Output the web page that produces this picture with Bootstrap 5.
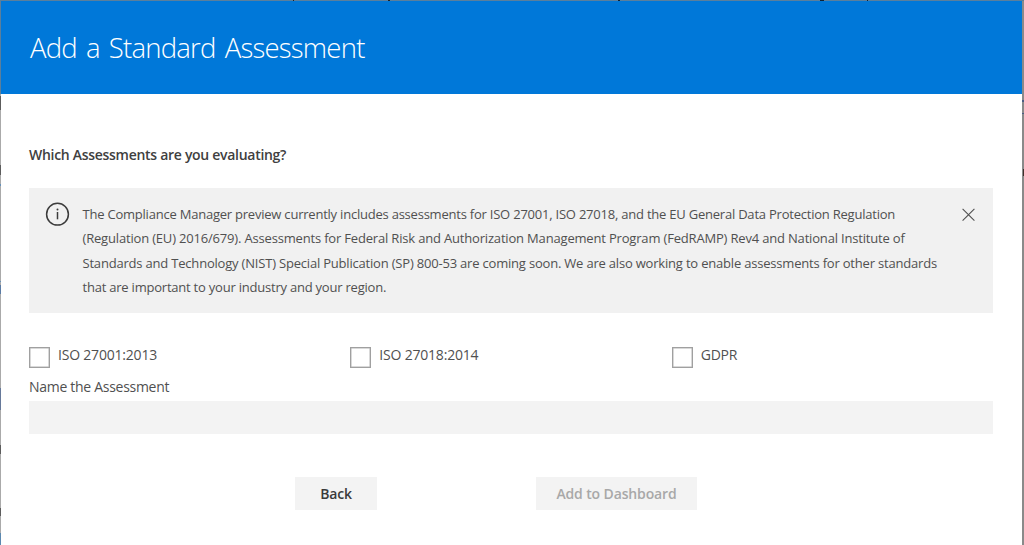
<!DOCTYPE html>
<html lang="en">
<head>
<meta charset="utf-8">
<title>Add a Standard Assessment</title>
<meta name="viewport" content="width=device-width, initial-scale=1">
<link href="https://cdn.jsdelivr.net/npm/bootstrap@5.3.0/dist/css/bootstrap.min.css" rel="stylesheet">
<script src="https://cdn.jsdelivr.net/npm/bootstrap@5.3.0/dist/js/bootstrap.bundle.min.js" defer></script>
<style>
/* dimmed page behind the dialog: only its 1-2px edges show */
body{
  height:545px;padding:1px 2px 0 1px;overflow:hidden;
  font:400 14px/24.5px "Open Sans","Noto Sans",sans-serif;color:#505050;
  background:
    linear-gradient(#222 0 0) 293px 0/1px 1px no-repeat,
    linear-gradient(#222 0 0) 388px 0/2px 1px no-repeat,
    linear-gradient(#123 0 0) 618px 0/2px 1px no-repeat,
    linear-gradient(#123 0 0) 820px 0/4px 1px no-repeat,
    linear-gradient(#123 0 0) 867px 0/1px 1px no-repeat,
    linear-gradient(#5b7f9c 0 0) 0 0/100% 1px no-repeat,
    linear-gradient(#4a5c84 0 0) 1022px 100px/2px 2px no-repeat,
    linear-gradient(#4a5c84 0 0) 1022px 113px/2px 1px no-repeat,
    linear-gradient(#40302c 0 0) 1023px 169px/1px 7px no-repeat,
    linear-gradient(#8a8a8a 0 0) 1022px 0/2px 100% no-repeat,
    linear-gradient(#5b7f9c 0 94px,#aaa 94px 96px,#5c5c5c 96px 110px,#aaa 110px 165px,#5c5c5c 165px 175px,#aaa 175px 184px,#6590b8 184px 186px,#aaa 186px 281px,#6590b8 281px 282px,#aaa 282px 285px,#5b7ba4 285px 294px,#aaa 294px 388px,#66799a 388px 410px,#aaa 410px 445px,#5c5c5c 445px 454px,#aaa 454px 508px,#5c5c5c 508px 516px,#aaa 516px 533px,#5b88b0 533px 545px);
}
.dialog{height:544px}
.dialog-head{height:93px;padding:1px 0 0 29px;background:#0078d9}
.dialog-head h1{font-size:27.5px;font-weight:300;letter-spacing:-.78px;word-spacing:2.7px;line-height:40px}
.dialog-main{padding:0 29px 0 28px}
.question{font-size:14px;font-weight:600;letter-spacing:-.29px;line-height:24px;margin:49px 0 21px;color:#404040}
.notice{height:125px;background:#f1f1f1;padding:13.5px 17.5px 0 15.5px}
.notice p{font-size:13px;width:880px;margin:0 0 0 13px;white-space:nowrap}
.notice p span{display:block}
.l1{letter-spacing:-.221px}.l2{letter-spacing:-.178px}.l3{letter-spacing:-.196px}.l4{letter-spacing:-.22px}
.options{margin-top:30px;height:32px}
.option{letter-spacing:-.2px;line-height:24px}
.tick{width:21px;height:21px;margin:4px 8px 0 0;border:1px solid #a0a0a0;border-radius:0;appearance:none;background:#fff;box-shadow:inset 0 0 0 .5px #b4b4b4}
.name-label{line-height:24px;letter-spacing:-.29px;margin-bottom:2px}
.name-box{height:33px;border:0;border-radius:0;background:#f3f3f3}
.actions{margin:43px 0 0 266px;gap:159px}
.act{height:33px;border:0;border-radius:0;padding:0;background:#f3f3f3;font-size:14px;font-weight:600;line-height:34px;color:#3a3a3a}
.act-back{width:82px;letter-spacing:-.2px}
.act-add{width:161px;letter-spacing:-.13px}
.act:disabled{background:#f3f3f3;color:#a8a8a8;opacity:1}
</style>
</head>
<body>
<div class="dialog bg-white">
  <header class="dialog-head d-flex align-items-center text-white"><h1 class="mb-0">Add a Standard Assessment</h1></header>
  <main class="dialog-main overflow-hidden">
    <h2 class="question">Which Assessments are you evaluating?</h2>
    <div class="notice d-flex align-items-start" role="note">
      <svg class="flex-shrink-0" width="25" height="25" viewBox="0 0 25 25" fill="none" stroke="#3c3c3c"><circle cx="12.5" cy="12.2" r="10.9" stroke-width="1.5"/><path d="M12.5 10v7.3" stroke-width="1.5"/><circle cx="12.5" cy="7.5" r="1" fill="#3c3c3c" stroke="none"/></svg>
      <p><span class="l1">The Compliance Manager preview currently includes assessments for ISO 27001, ISO 27018, and the EU General Data Protection Regulation</span><span class="l2">(Regulation (EU) 2016/679). Assessments for Federal Risk and Authorization Management Program (FedRAMP) Rev4 and National Institute of</span><span class="l3">Standards and Technology (NIST) Special Publication (SP) 800-53 are coming soon. We are also working to enable assessments for other standards</span><span class="l4">that are important to your industry and your region.</span></p>
      <svg class="ms-auto flex-shrink-0" width="15" height="25" viewBox="0 0 15 25" fill="none" stroke="#505050" stroke-width="1.1"><path d="M1.6 6.9 13.4 18.7M13.4 6.9 1.6 18.7"/></svg>
    </div>
    <div class="options row gx-0">
      <label class="option col-4 d-flex align-items-start"><input class="tick" type="checkbox">ISO 27001:2013</label>
      <label class="option col-4 d-flex align-items-start"><input class="tick" type="checkbox">ISO 27018:2014</label>
      <label class="option col-4 d-flex align-items-start"><input class="tick" type="checkbox">GDPR</label>
    </div>
    <label class="name-label d-block" for="nm">Name the Assessment</label>
    <input id="nm" class="name-box d-block w-100" type="text">
    <div class="actions d-flex">
      <button class="btn act act-back" type="button">Back</button>
      <button class="btn act act-add" type="button" disabled>Add to Dashboard</button>
    </div>
  </main>
</div>
</body>
</html>
